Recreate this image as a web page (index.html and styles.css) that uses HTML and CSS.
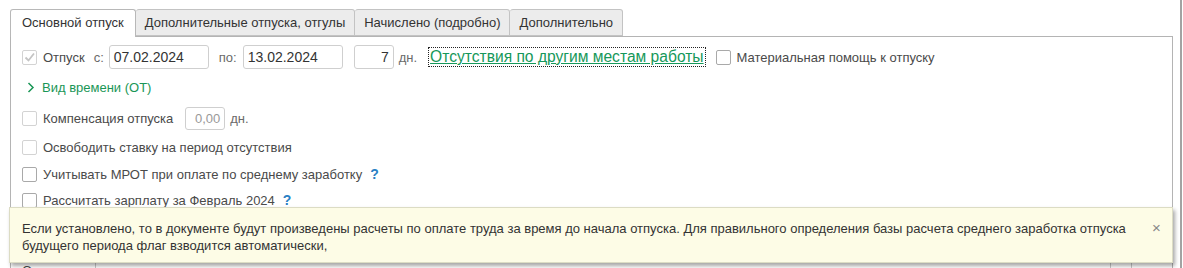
FILE: index.html
```html
<html>
    <head>
        <meta charset="utf-8">
        <link rel="stylesheet" href="styles.css">
    </head>
    <body>
        <div class="scrollbar"></div>
        <div class="tabs">
            <div class="tab active">Основной отпуск</div>
            <div class="tab">Дополнительные отпуска, отгулы</div>
            <div class="tab">Начислено (подробно)</div>
            <div class="tab">Дополнительно</div>
        </div>
        <div class="panel">
            <div class="row row1">
                <span class="check checked disabled">
                    <svg width="13" height="13" viewBox="0 0 13 13"><polyline points="2.5,6.5 5.5,9.5 11,2.5" fill="none" stroke="#c4c4c4" stroke-width="1.8"/></svg>
                </span>
                <span class="label otpusk">Отпуск</span>
                <span class="label soft">с:</span>
                <div class="input date">07.02.2024</div>
                <span class="label soft po">по:</span>
                <div class="input date">13.02.2024</div>
                <div class="input days">7</div>
                <span class="label soft dn">дн.</span>
                <span class="link">Отсутствия по другим местам работы</span>
                <span class="check"></span>
                <span class="label">Материальная помощь к отпуску</span>
            </div>
            <div class="row row2">
                <svg class="chevron" width="8" height="11" viewBox="0 0 8 11"><polyline points="1.5,1 6,5.5 1.5,10" fill="none" stroke="#1a9656" stroke-width="1.5"/></svg>
                <span class="group">Вид времени (ОТ)</span>
            </div>
            <div class="row row3">
                <span class="check disabled"></span>
                <span class="label">Компенсация отпуска</span>
                <div class="input small">0,00</div>
                <span class="label soft dn">дн.</span>
            </div>
            <div class="row row4">
                <span class="check disabled"></span>
                <span class="label">Освободить ставку на период отсутствия</span>
            </div>
            <div class="row row5">
                <span class="check"></span>
                <span class="label">Учитывать МРОТ при оплате по среднему заработку</span>
                <span class="hint">?</span>
            </div>
            <div class="row row6">
                <span class="check"></span>
                <span class="label">Рассчитать зарплату за Февраль 2024</span>
                <span class="hint dotted">?</span>
            </div>
            <div class="row row7">
                <span class="label osn">Основание:</span>
                <div class="input wide"><span class="dots">...</span></div>
            </div>
        </div>
        <div class="tooltip">
            <div class="tooltip-text">Если установлено, то в документе будут произведены расчеты по оплате труда за время до начала отпуска. Для правильного определения базы расчета среднего заработка отпуска будущего периода флаг взводится автоматически,</div>
            <span class="close">×</span>
        </div>
    </body>
</html>
```

FILE: styles.css
```css
body{
    margin: 0;
    font-family: "Liberation Sans", Arial, sans-serif;
    font-size: 13px;
    color: #4a4a4a;
    background: #fff;
    overflow: hidden;
    height: 268px;
}

.scrollbar{
    position: absolute;
    left: 1180px;
    top: 0;
    width: 2px;
    height: 268px;
    background: #a3a3a3;
}

.tabs{
    display: flex;
    padding-left: 10px;
    margin-top: 9px;
    height: 27px;
}

.tab{
    box-sizing: border-box;
    height: 27px;
    padding: 0 9px;
    line-height: 25px;
    border: 1px solid #c3c3c3;
    border-left: none;
    border-radius: 3px 3px 0 0;
    background: #ececec;
    color: #333;
}

.tab.active{
    background: #fff;
    border-left: 1px solid #b8b8b8;
    border-color: #b8b8b8;
    border-bottom: none;
    height: 28px;
    padding: 0 11px;
    position: relative;
    z-index: 1;
}

.panel{
    box-sizing: border-box;
    margin-left: 10px;
    width: 1163px;
    height: 300px;
    border: 1px solid #b4b4b4;
    padding: 5px 0 0 11px;
}

.row{
    display: flex;
    align-items: center;
    height: 30px;
    white-space: nowrap;
}

.row2{ height: 31px; }
.row4{ height: 28px; }
.row5{ height: 26px; }
.row6{ height: 26px; }
.row7{ margin-top: 45px; height: 24px; }

.check{
    box-sizing: border-box;
    display: inline-flex;
    align-items: center;
    justify-content: center;
    width: 15px;
    height: 15px;
    border: 1px solid #a9a9a9;
    border-radius: 2px;
    margin-right: 6px;
    background: #fff;
}

.check.disabled{
    border-color: #d3d3d3;
}

.label.otpusk{ margin-right: 9px; }
.label.soft{ color: #6a6a6a; }
.label.po{ margin-left: 10px; margin-right: 1px; }
.label.dn{ margin-left: 5px; }

.input{
    box-sizing: border-box;
    height: 24px;
    border: 1px solid #cfcfcf;
    border-radius: 3px;
    padding: 0 4px;
    line-height: 22px;
    color: #333;
    font-size: 14px;
    margin-left: 5px;
}

.input.date{ width: 100px; }
.input.days{ width: 40px; text-align: right; margin-left: 11px; }

.input.small{
    width: 40px;
    height: 23px;
    line-height: 21px;
    text-align: right;
    color: #999;
    margin-left: 12px;
    font-size: 13px;
}

.input.wide{
    width: 1037px;
    margin-left: 3px;
    position: relative;
    border-color: #c8c8c8;
    border-radius: 0;
}

.dots{
    position: absolute;
    right: 0;
    top: 0;
    width: 20px;
    height: 22px;
    border-left: 1px solid #c8c8c8;
    text-align: center;
}

.link{
    margin-left: 12px;
    margin-right: 11px;
    font-size: 15.6px;
    color: #15985a;
    text-decoration: underline;
    outline: 1px dotted #222;
    line-height: 18px;
    padding: 0 1px;
}

.chevron{
    margin-left: 5px;
    margin-right: 7px;
}

.group{
    color: #1a9656;
}

.hint{
    margin-left: 8px;
    color: #2a7fc4;
    font-weight: bold;
    font-size: 14px;
}

.hint.dotted{
    border-bottom: 1px dotted #2a7fc4;
    line-height: 14px;
}

.tooltip{
    position: absolute;
    left: 9px;
    top: 207px;
    width: 1164px;
    height: 56px;
    box-sizing: border-box;
    background: #fdfce6;
    border: 1px solid #dcdcc4;
    box-shadow: 2px 3px 4px rgba(0, 0, 0, 0.35);
    display: flex;
    padding: 12px 0 0 12px;
}

.tooltip-text{
    width: 1110px;
    line-height: 17px;
    color: #333;
}

.close{
    margin-left: 20px;
    color: #888;
    font-size: 15px;
    line-height: 16px;
}
```
